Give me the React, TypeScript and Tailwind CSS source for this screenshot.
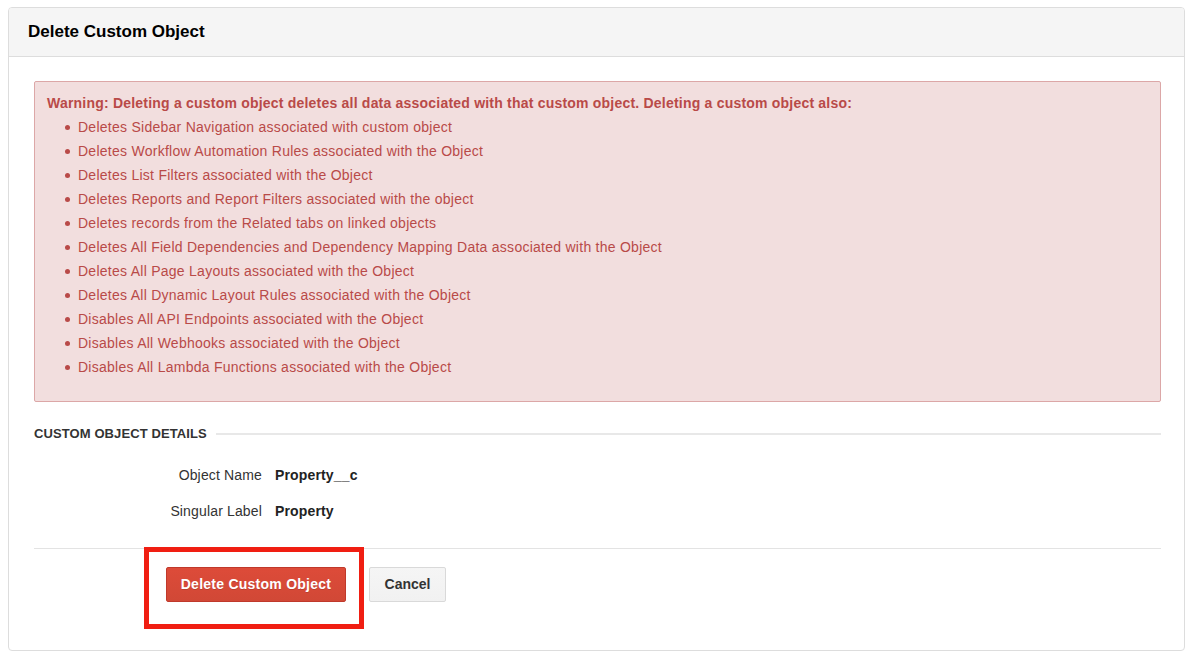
import React from "react";

const consequences = [
  "Deletes Sidebar Navigation associated with custom object",
  "Deletes Workflow Automation Rules associated with the Object",
  "Deletes List Filters associated with the Object",
  "Deletes Reports and Report Filters associated with the object",
  "Deletes records from the Related tabs on linked objects",
  "Deletes All Field Dependencies and Dependency Mapping Data associated with the Object",
  "Deletes All Page Layouts associated with the Object",
  "Deletes All Dynamic Layout Rules associated with the Object",
  "Disables All API Endpoints associated with the Object",
  "Disables All Webhooks associated with the Object",
  "Disables All Lambda Functions associated with the Object",
];

const details = [
  { label: "Object Name", value: "Property__c" },
  { label: "Singular Label", value: "Property" },
];

export default function App() {
  return (
    <div
      className="w-[1191px] h-[657px] bg-white pl-[8px] pt-[7px] text-[#333]"
      style={{ fontFamily: '"Liberation Sans", Arial, Helvetica, sans-serif' }}
    >
      <div className="w-[1177px] h-[644px] border border-[#dddddd] rounded-[4px] overflow-hidden flex flex-col">
        {/* panel header */}
        <div className="h-[49px] shrink-0 bg-[#f5f5f5] border-b border-[#dddddd] flex items-center px-[19px]">
          <h1 className="text-[17px] font-bold text-black">Delete Custom Object</h1>
        </div>

        {/* panel body */}
        <div className="flex-1 pl-[25px] pr-[23px] pt-[24px]">
          {/* warning */}
          <div className="bg-[#f2dede] border border-[#dca7a7] rounded-[2px] pl-[12px] pr-[12px] pt-[9px] pb-[22px] text-[#b94a48] text-[14px] tracking-[0.26px]">
            <p className="font-bold leading-[24px] tracking-[0.21px]">
              Warning: Deleting a custom object deletes all data associated with that custom object. Deleting a custom
              object also:
            </p>
            <ul>
              {consequences.map((item) => (
                <li key={item} className="flex items-center leading-[24px] pl-[18px]">
                  <span className="w-[5px] h-[5px] rounded-full bg-[#b94a48] mr-[8px] shrink-0" />
                  <span>{item}</span>
                </li>
              ))}
            </ul>
          </div>

          {/* section heading */}
          <div className="flex items-center mt-[22px] h-[20px]">
            <span className="text-[13px] font-bold text-[#333] tracking-[0.1px]">CUSTOM OBJECT DETAILS</span>
            <span className="flex-1 h-[2px] bg-[#e8e8e8] ml-[9px]" />
          </div>

          {/* details */}
          <div className="mt-[19px] flex flex-col gap-[12px]">
            {details.map((d) => (
              <div key={d.label} className="flex items-center h-[24px] text-[14px] tracking-[0.15px]">
                <span className="w-[228px] text-right text-[#333]">{d.label}</span>
                <span className="ml-[13px] font-bold text-[#222]">{d.value}</span>
              </div>
            ))}
          </div>

          <div className="h-px bg-[#e3e3e3] mt-[25px]" />

          {/* actions */}
          <div className="relative mt-[18px] pl-[132px] flex gap-[23px]">
            <button className="w-[180px] h-[35px] rounded-[2px] border border-[#c0392b] bg-gradient-to-b from-[#dd4b39] to-[#d14836] text-white font-bold text-[14px] tracking-[0.25px] [text-shadow:0_1px_0_rgba(0,0,0,0.15)]">
              Delete Custom Object
            </button>
            <button className="w-[77px] h-[35px] rounded-[2px] border border-[#d9d9d9] bg-gradient-to-b from-[#f5f5f5] to-[#f1f1f1] text-[#333] font-bold text-[14px]">
              Cancel
            </button>
            {/* emphasis outline around the delete action */}
            <div className="absolute left-[110px] top-[-20px] w-[220px] h-[82px] border-[5px] border-[#f01e12] pointer-events-none" />
          </div>
        </div>
      </div>
    </div>
  );
}
